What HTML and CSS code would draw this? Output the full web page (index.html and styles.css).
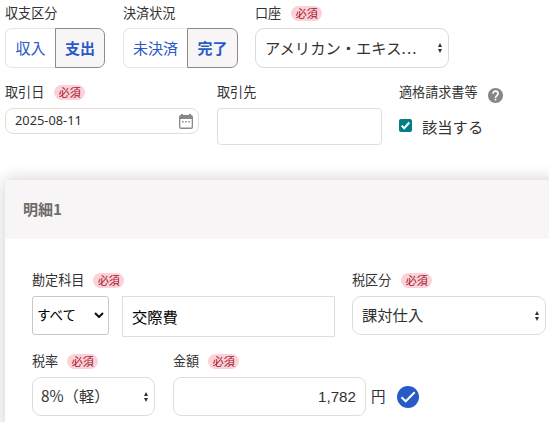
FILE: index.html
```html
<!DOCTYPE html>
<html lang="ja">
<head>
<meta charset="utf-8">
<title>収支登録</title>
<link rel="stylesheet" href="styles.css">
</head>
<body>
<main class="page">
  <div class="row row-top">
    <div class="field">
      <div class="label">収支区分</div>
      <div class="segment segment-kind"><span class="seg">収入</span><span class="seg active">支出</span></div>
    </div>
    <div class="field">
      <div class="label">決済状況</div>
      <div class="segment segment-status"><span class="seg">未決済</span><span class="seg active">完了</span></div>
    </div>
    <div class="field account">
      <div class="label">口座<span class="badge">必須</span></div>
      <div class="select tall"><span>アメリカン・エキス<span class="dots">...</span></span><svg class="sort" viewBox="0 0 4 10"><path d="M0 4L2 0L4 4ZM0 6L2 10L4 6Z"/></svg></div>
    </div>
  </div>

  <div class="row row-second">
    <div class="field date-field">
      <div class="label">取引日<span class="badge">必須</span></div>
      <div class="date"><span>2025-08-11</span>
        <svg class="calendar" viewBox="0 0 14 15"><path fill="#888" fill-rule="evenodd" d="M2 0H4V1H10V0H12V1Q14 1 14 3V13Q14 15 12 15H2Q0 15 0 13V3Q0 1 2 1ZM1.300 5V13.600H12.700V5Z"/><path fill="#888" d="M3 7H4.500V8.500H3ZM6.200 7H7.700V8.500H6.200ZM9.400 7H10.900V8.500H9.400Z"/></svg>
      </div>
    </div>
    <div class="field partner">
      <div class="label">取引先</div>
      <div class="partner-input"></div>
    </div>
    <div class="field invoice">
      <div class="label">適格請求書等
        <svg class="help" viewBox="0 0 24 24"><path fill="#878787" d="M12 0C5.370 0 0 5.370 0 12s5.370 12 12 12 12-5.370 12-12S18.630 0 12 0z"/><path fill="none" stroke="#fff" stroke-width="2.600" d="M7.900 9.200C7.900 3.600 16.100 3.600 16.100 9.200C16.100 12.100 12 12.200 12 15.800"/><path fill="#fff" d="M10.700 17.300H13.300V19.900H10.700Z"/></svg>
      </div>
      <div class="check"><svg class="box" viewBox="0 0 13 13"><rect width="13" height="13" rx="2" fill="#007f85"/><path d="M2.700 6.600L5.200 9.200L10.300 3.500" fill="none" stroke="#fff" stroke-width="2"/></svg><span>該当する</span></div>
    </div>
  </div>

  <section class="card">
    <h2 class="card-title">明細1</h2>
    <div class="card-body">
      <div class="row">
        <div class="field subject">
          <div class="label">勘定科目<span class="badge">必須</span></div>
          <div class="subject-controls">
            <div class="native"><span>すべて</span><svg class="chevron" viewBox="0 0 10 6"><path d="M1 1L5 5L9 1" fill="none" stroke="#111" stroke-width="2"/></svg></div>
            <div class="subject-input">交際費</div>
          </div>
        </div>
        <div class="field tax-kind">
          <div class="label">税区分<span class="badge">必須</span></div>
          <div class="select"><span>課対仕入</span><svg class="sort" viewBox="0 0 4 10"><path d="M0 4L2 0L4 4ZM0 6L2 10L4 6Z"/></svg></div>
        </div>
      </div>
      <div class="row row-amount">
        <div class="field tax-rate">
          <div class="label">税率<span class="badge">必須</span></div>
          <div class="select"><span>8%（軽）</span><svg class="sort" viewBox="0 0 4 10"><path d="M0 4L2 0L4 4ZM0 6L2 10L4 6Z"/></svg></div>
        </div>
        <div class="field">
          <div class="label">金額<span class="badge">必須</span></div>
          <div class="amount"><div class="amount-input">1,782</div><span class="yen">円</span>
            <svg class="done" viewBox="0 0 22 22"><circle cx="11" cy="11" r="11" fill="#285ac8"/><path d="M4.500 11.200L8.700 15.300L17.700 6.300" fill="none" stroke="#fff" stroke-width="2"/></svg>
          </div>
        </div>
      </div>
    </div>
  </section>
</main>
</body>
</html>
```
FILE: styles.css
```css
* { box-sizing: border-box; }

body {
  margin: 0;
  background: #fff;
  color: #323232;
  font-family: "Noto Sans CJK JP", sans-serif;
  font-size: 15.3px;
  overflow: hidden;
}

.page { width: 560px; height: 422px; padding: 3px 0 0 5px; overflow: hidden; }
.row { display: flex; align-items: flex-start; }
.row-top { gap: 18px; }
.row-top .label { margin-bottom: 5px; }
.row-top .account { margin-left: -1px; }
.row-second { margin-top: 14px; gap: 18px; }

.label {
  display: flex;
  align-items: center;
  height: 20px;
  margin-bottom: 6px;
  font-size: 13.1px;
  line-height: 20px;
  white-space: nowrap;
}

.badge {
  width: 31px;
  height: 15px;
  margin-left: 9px;
  border-radius: 8px;
  background: #fad2d7;
  color: #a50f2d;
  font-size: 11px;
  line-height: 14px;
  text-align: center;
}
.row-top .badge, .date-field .badge, .tax-kind .badge { margin-left: 10px; }

.segment { display: flex; height: 40px; color: #285ac8; font-size: 15px; line-height: 38px; text-align: center; }
.segment-kind { width: 100px; }
.segment-status { width: 115px; }
.seg { flex: 1; border: 1px solid #e6e4e4; border-right: 0; border-radius: 7px 0 0 7px; }
.seg.active {
  flex: 0 0 50px;
  border: 1px solid #8c8989;
  border-radius: 0 7px 7px 0;
  background: #f7f5f6;
  font-weight: 700;
}
.segment-status .active { flex-basis: 51px; }

.select {
  display: flex;
  align-items: center;
  justify-content: space-between;
  height: 39px;
  padding: 0 6px 0 9px;
  border: 1px solid #dcdcdc;
  border-radius: 9px;
  line-height: 35px;
  white-space: nowrap;
}
.select > span { margin-bottom: 2px; }
.select.tall { height: 40px; }
.dots { letter-spacing: 1.2px; }
.sort { width: 4px; height: 10px; fill: #323232; }
.account, .tax-kind { width: 194px; }

.date-field { width: 194px; }
.date {
  display: flex;
  align-items: center;
  justify-content: space-between;
  height: 26px;
  padding: 0 5px 0 9px;
  border: 1px solid #e1dfd4;
  border-radius: 8px;
  font: 12.8px/22px "Noto Sans", sans-serif;
}
.date span { margin-bottom: 2px; }
.calendar { width: 14px; height: 15px; }
.partner { width: 165px; }
.partner-input { height: 37px; border: 1px solid #e1dfd4; border-radius: 4px; }
.invoice { margin-left: -1px; }
.help { width: 15px; height: 15px; margin: 6px 0 0 10px; }
.check { display: flex; align-items: center; gap: 10px; height: 37px; }
.box { width: 13px; height: 13px; margin-bottom: 2px; }
.check span { line-height: 20px; margin-bottom: 2px; }

.card { height: 260px; margin-top: 35px; background: #fff; box-shadow: 0 0 16px rgba(0, 0, 0, .2); }
.card-title {
  height: 59px;
  margin: 0;
  padding-left: 18px;
  background: #f7f5f6;
  color: #6e6b6b;
  font-size: 15px;
  line-height: 58px;
}
.card-body { padding: 31px 0 0 27px; }
.card .row { gap: 17px; }
.subject-controls { display: flex; align-items: flex-start; gap: 13px; }
.native {
  display: flex;
  align-items: center;
  justify-content: space-between;
  width: 77px;
  height: 39px;
  padding: 0 4px 2px 5px;
  border: 1px solid #c8c8c8;
  border-radius: 3px;
  color: #000;
  font-size: 13.5px;
}
.native span { margin: 0 0 2px -1px; }
.chevron { width: 10px; height: 6px; margin-top: 1px; }
.subject-input {
  width: 213px;
  height: 41px;
  padding-left: 9px;
  border: 1px solid #e1dfd4;
  color: #000;
  line-height: 38px;
}
.card .row-amount { margin-top: 14px; gap: 18px; }
.tax-rate { width: 123px; }
.tax-rate .select { padding-left: 8px; }
.amount { display: flex; align-items: center; }
.amount-input {
  width: 193px;
  height: 39px;
  padding-right: 9px;
  border: 1px solid #e1dfd4;
  border-radius: 8px;
  font: 15.2px/37px "Liberation Sans", sans-serif;
  text-align: right;
}
.yen { width: 15px; margin: 0 0 2px 5px; font-size: 14.5px; }
.done { width: 22px; height: 22px; margin-left: 11px; }
```
